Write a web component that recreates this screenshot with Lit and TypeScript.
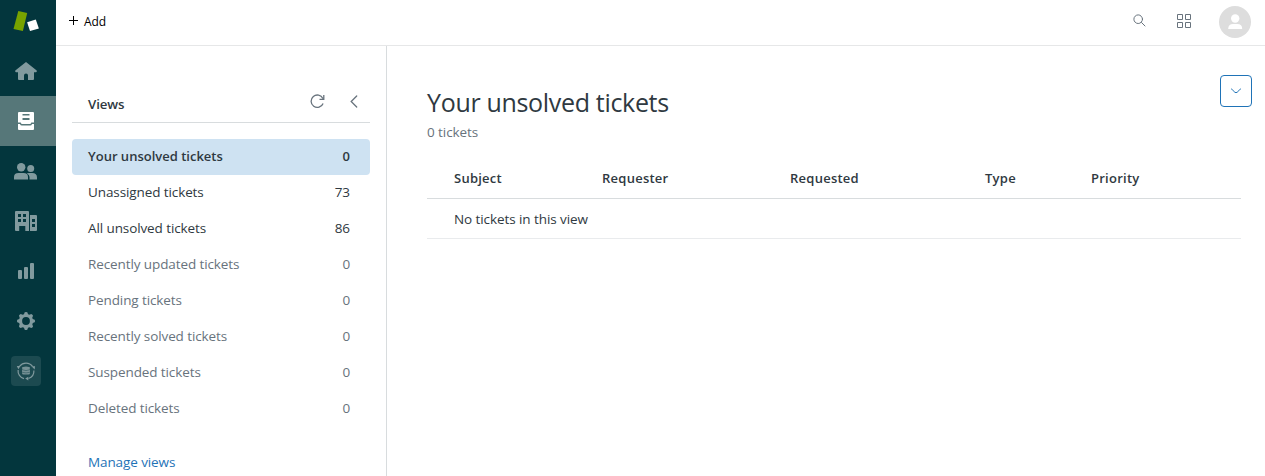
import { LitElement, html, css, svg } from "lit";
import { customElement } from "lit/decorators.js";
import { classMap } from "lit/directives/class-map.js";

interface View {
  name: string;
  count: number;
  muted?: boolean;
  active?: boolean;
}

const VIEWS: View[] = [
  { name: "Your unsolved tickets", count: 0, active: true },
  { name: "Unassigned tickets", count: 73 },
  { name: "All unsolved tickets", count: 86 },
  { name: "Recently updated tickets", count: 0, muted: true },
  { name: "Pending tickets", count: 0, muted: true },
  { name: "Recently solved tickets", count: 0, muted: true },
  { name: "Suspended tickets", count: 0, muted: true },
  { name: "Deleted tickets", count: 0, muted: true },
];

const icon = (w: number, h: number, body: unknown) =>
  html`<svg width=${w} height=${h} viewBox="0 0 ${w} ${h}" fill="currentColor" aria-hidden="true">${body}</svg>`;

const logo = icon(26, 22, svg`
  <path d="M5.300 1 14.200 3l-4.300 18L.5 19Z" fill="#78a300"/>
  <path d="M14.100 12.200 22.800 9.500l3.100 9-8.900 2.400Z" fill="#fff"/>`);

const home = icon(22, 18, svg`
  <path d="M11 0 21.700 8.600Q22.200 10.500 20.500 10.300H19V17q0 1-1 1h-5v-4.400a2 2 0 0 0-4 0V18H4q-1 0-1-1v-6.700H1.500Q-.2 10.500.3 8.600Z"/>`);

const tray = icon(16, 18, svg`
  <path fill-rule="evenodd" d="M1 0h14q1 0 1 1v9.500h-2.500q-.5 0-.5.500 0 1-1 1H4q-1 0-1-1 0-.5-.5-.5H0V1q0-1 1-1Zm3.500 2v1.500h7V2Zm0 4v2h7V6Z"/>
  <path d="M0 12h2q.3 1.500 2 1.500h8q1.700 0 2-1.500h2V17q0 1-1 1H1q-1 0-1-1Z"/>`);

const people = icon(24, 17, svg`
  <circle cx="7.200" cy="4.200" r="4.200"/><circle cx="16.700" cy="5.400" r="3.500"/>
  <path d="M0 16.500V14q0-4 4.500-4h5q4.500 0 4.500 4v2.500ZM12.700 10.400q1-.4 2-.4h3.500q4.800 0 4.800 4.500v2h-7.500V14q0-2.300-2.800-3.600Z"/>`);

const building = icon(22, 20, svg`
  <path fill-rule="evenodd" d="M1 0h12q1 0 1 1v19h-3.700v-5H4.200v5H1q-1 0-1-1V1q0-1 1-1Zm2 3v3h3V3Zm5 0v3h3V3ZM3 8v3h3V8Zm5 0v3h3V8Z"/>
  <path fill-rule="evenodd" d="M15 4h6q1 0 1 1v14q0 1-1 1h-6Zm2 4v3h3V8Zm0 5v3h3v-3Z"/>`);

const bars = icon(16, 16, svg`
  <rect y="7" width="4" height="9" rx="1"/><rect x="6" y="4" width="4" height="12" rx="1"/><rect x="12" width="4" height="16" rx="1"/>`);

const gear = icon(18, 18, svg`
  <circle cx="9" cy="9" r="5.500" fill="none" stroke="currentColor" stroke-width="3.200"/>
  ${[0, 45, 90, 135, 180, 225, 270, 315].map(
    (a) => svg`<path d="M6.500 3.500 7.700.3Q9-.3 10.300.3l1.200 3.200Z" transform="rotate(${a} 9 9)"/>`
  )}`);

const sync = icon(20, 20, svg`
  <g fill="none" stroke="currentColor" stroke-width="1.200">
    <path d="M3.600 5.200A8 8 0 0 1 16.500 5.400M17.900 9.500A8 8 0 0 1 12.500 17.500M8 17.700A8 8 0 0 1 2.100 9"/>
  </g>
  <path d="M.8 5h3.600l-2 3.200ZM15.500 5.300h3.600l-.5 3.200ZM12.300 15.700v3.700l-3.100-1.900Z"/>
  <g opacity=".9"><ellipse cx="10" cy="7" rx="4" ry="1.500"/>
  <rect x="6" y="7.500" width="8" height="6" rx="1.500"/></g>
  <path d="M6 8.700q4 1.800 8 0M6 11.200q4 1.500 8 0" fill="none" stroke="#1c4a50" stroke-width=".5"/>`);

@customElement("nav-rail")
export class NavRail extends LitElement {
  static styles = css`
    :host { display: flex; flex-direction: column; width: 56px; flex: none; background: #03363d; color: #819a9e; }
    svg { display: block; }
    .logo { height: 46px; padding: 10px 0 0 13px; box-sizing: border-box; }
    .item { height: 50px; display: flex; align-items: center; justify-content: center; padding-right: 4px; box-sizing: border-box; }
    .active { background: #567779; color: #fff; }
    .app { width: 30px; height: 30px; border-radius: 4px; background: #1c4a50; display: flex; align-items: center; justify-content: center; }
  `;

  render() {
    return html`
      <div class="logo">${logo}</div>
      <div class="item">${home}</div>
      <div class="item active">${tray}</div>
      <div class="item">${people}</div>
      <div class="item">${building}</div>
      <div class="item">${bars}</div>
      <div class="item">${gear}</div>
      <div class="item"><div class="app">${sync}</div></div>
    `;
  }
}

@customElement("top-bar")
export class TopBar extends LitElement {
  static styles = css`
    :host { display: flex; height: 46px; box-sizing: border-box; border-bottom: 1px solid #e6e7e8; padding: 0 14px 0 13px; align-items: center; color: #68737d; }
    svg { display: block; }
    .add { display: flex; align-items: center; gap: 6px; color: #000; font-size: 12px; line-height: 16px; padding-bottom: 2px; letter-spacing: -0.15px; }
    .plus { margin-top: -2px; }
    .space { flex: 1; }
    .search { margin: 0 31px 4px 0; }
    .grid { margin: 0 28px 3px 0; }
    .avatar { margin-bottom: 1px; }
  `;

  render() {
    return html`
      <div class="add">
        <span class="plus">${icon(9, 9, svg`<path d="M4 0h1v4h4v1H5v4H4V5H0V4h4Z"/>`)}</span>
        <span>Add</span>
      </div>
      <div class="space"></div>
      <div class="search">${icon(13, 13, svg`<g fill="none" stroke="currentColor" stroke-linecap="round"><circle cx="5.200" cy="5.200" r="4.300"/><path d="m8.500 8.500 3.500 3.500"/></g>`)}</div>
      <div class="grid">${icon(14, 14, svg`<path fill="none" stroke="currentColor" d="M.5.5h5v5h-5ZM8.500.5h5v5h-5ZM.5 8.500h5v5h-5ZM8.500 8.500h5v5h-5Z"/>`)}</div>
      <div class="avatar">${icon(32, 32, svg`<circle cx="16" cy="16" r="16" fill="#ddd"/><g fill="#fff"><circle cx="16.200" cy="12.500" r="4.200"/><path d="M9.200 23q0-5 5-5h4q5 0 5 5Z"/></g>`)}</div>
    `;
  }
}

@customElement("views-panel")
export class ViewsPanel extends LitElement {
  static styles = css`
    :host { display: block; width: 331px; flex: none; box-sizing: border-box; border-right: 1px solid #d8dcde; padding: 38px 16px 0; font-size: 13.500px; line-height: 20px; letter-spacing: -0.1px; }
    svg { display: block; }
    .head { display: flex; align-items: center; height: 39px; box-sizing: border-box; border-bottom: 1px solid #d8dcde; padding: 2px 12px 0 16px; color: #68737d; }
    .title { flex: 1; color: #2f3941; font-weight: 600; font-size: 13.300px; }
    .refresh { margin: 0 25px 5px 0; }
    .back { margin-bottom: 5px; }
    .list { margin: 16px 0 0; padding: 0; list-style: none; }
    .row { display: flex; justify-content: space-between; height: 36px; line-height: 35px; box-sizing: border-box; padding: 0 20px 0 16px; border-radius: 4px; color: #2f3941; }
    .muted { color: #68737d; }
    .active { background: #cee2f2; font-weight: 600; font-size: 13px; letter-spacing: 0; }
    .manage { margin: 25px 0 0 16px; color: #1f73b7; }
  `;

  render() {
    return html`
      <div class="head">
        <span class="title">Views</span>
        <span class="refresh">${icon(15, 15, svg`<g fill="none" stroke="currentColor" stroke-width="1.300"><path d="M12.900 4.500A6.200 6.200 0 1 0 13.100 9.500M13.800 1v4.300H9.500"/></g>`)}</span>
        <span class="back">${icon(8, 13, svg`<path d="m6.700 1-5.500 5.500 5.500 5.500" fill="none" stroke="currentColor" stroke-width="1.300" stroke-linecap="round"/>`)}</span>
      </div>
      <ul class="list">
        ${VIEWS.map(
          (v) => html`<li class=${classMap({ row: true, muted: !!v.muted, active: !!v.active })}>
            <span>${v.name}</span><span>${v.count}</span>
          </li>`
        )}
      </ul>
      <div class="manage">Manage views</div>
    `;
  }
}

@customElement("ticket-list")
export class TicketList extends LitElement {
  static styles = css`
    :host { display: block; flex: 1; min-width: 0; padding: 29px 13px 0 40px; color: #2f3941; font-size: 13.500px; line-height: 20px; letter-spacing: -0.080px; }
    svg { display: block; }
    .head { display: flex; justify-content: space-between; align-items: flex-start; height: 83px; }
    .title { margin: 11px 0 0; font-size: 25px; line-height: 32px; font-weight: 400; letter-spacing: -0.320px; }
    .sub { color: #68737d; margin-top: 4px; }
    .menu { width: 32px; height: 32px; box-sizing: border-box; border: 1px solid #1f73b7; border-radius: 4px; color: #1f73b7; display: flex; align-items: center; justify-content: center; }
    .table { margin-right: 11px; }
    .cols { display: grid; grid-template-columns: 148px 188px 195px 106px 1fr; padding-left: 27px; height: 41px; line-height: 40px; box-sizing: border-box; border-bottom: 1px solid #d8dcde; font-weight: 600; font-size: 13px; letter-spacing: 0.250px; }
    .empty { padding-left: 27px; height: 40px; line-height: 40px; box-sizing: border-box; border-bottom: 1px solid #e9ebed; }
  `;

  render() {
    return html`
      <div class="head">
        <div>
          <h1 class="title">Your unsolved tickets</h1>
          <div class="sub">0 tickets</div>
        </div>
        <div class="menu">${icon(12, 6, svg`<path d="M1 1q.7 0 1.200.6l2.600 2.600q1.200 1 2.400 0l2.600-2.600Q10.300 1 11 1" fill="none" stroke="currentColor"/>`)}</div>
      </div>
      <div class="table">
        <div class="cols">
          ${["Subject", "Requester", "Requested", "Type", "Priority"].map((c) => html`<span>${c}</span>`)}
        </div>
        <div class="empty">No tickets in this view</div>
      </div>
    `;
  }
}

@customElement("app-root")
export class AppRoot extends LitElement {
  static styles = css`
    :host { display: flex; height: 476px; overflow: hidden; background: #fff; font-family: "Open Sans", "Noto Sans", sans-serif; }
    .main { flex: 1; min-width: 0; display: flex; flex-direction: column; }
    .content { flex: 1; min-height: 0; display: flex; }
  `;

  render() {
    return html`
      <nav-rail></nav-rail>
      <div class="main">
        <top-bar></top-bar>
        <div class="content">
          <views-panel></views-panel>
          <ticket-list></ticket-list>
        </div>
      </div>
    `;
  }
}
